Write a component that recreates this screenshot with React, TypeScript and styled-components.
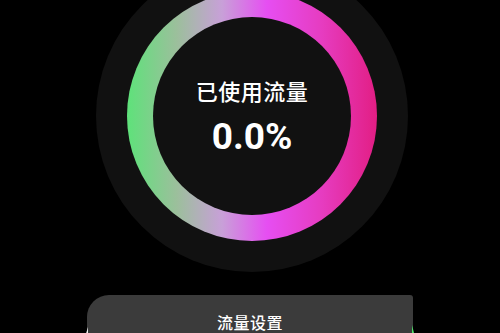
import React from "react";
import styled, { createGlobalStyle } from "styled-components";

const Global = createGlobalStyle`
  html, body { margin: 0; padding: 0; background: #000; }
  body { width: 500px; height: 333px; overflow: hidden; font-family: "Noto Sans CJK SC", "Noto Sans", sans-serif; }
`;

const Page = styled.div`
  width: 500px;
  height: 333px;
  background: #000;
  display: flex;
  flex-direction: column;
  align-items: center;
  overflow: hidden;
`;

const Plate = styled.div`
  width: 312px;
  height: 312px;
  border-radius: 50%;
  background: #111111;
  margin-top: -40px;
  margin-left: 4px;
  flex-shrink: 0;
  display: flex;
  align-items: center;
  justify-content: center;
`;

const Ring = styled.div`
  width: 250px;
  height: 250px;
  border-radius: 50%;
  background: linear-gradient(90deg, #5ee27a 0%, #9cbf9c 20%, #c8a0d8 38%, #e64ef2 56%, #e63cc0 78%, #e21e84 100%);
  display: flex;
  align-items: center;
  justify-content: center;
`;

const Inner = styled.div`
  width: 198px;
  height: 198px;
  border-radius: 50%;
  background: #111111;
  display: flex;
  flex-direction: column;
  align-items: center;
  justify-content: center;
  color: #fff;
  padding-top: 2px;
  box-sizing: border-box;
`;

const Label = styled.div`
  font-size: 22px;
  line-height: 28px;
  font-weight: 500;
  letter-spacing: 0.5px;
`;

const Value = styled.div`
  font-family: "Roboto", "Noto Sans", sans-serif;
  font-size: 37px;
  font-weight: 700;
  line-height: 42px;
  margin-top: 12px;
`;

const ButtonWrap = styled.div`
  position: relative;
  margin-top: 23px;
  width: 326px;
  flex-shrink: 0;
`;

const Button = styled.div`
  position: relative;
  height: 50px;
  background: #3b3b3b;
  border-radius: 22px 3px 0 0;
  color: #fff;
  font-size: 16px;
  font-weight: 500;
  display: flex;
  justify-content: center;
  padding-top: 15px;
  box-sizing: border-box;
  letter-spacing: 0.5px;
  &::before {
    content: "";
    position: absolute;
    left: -2px;
    top: 32px;
    width: 3px;
    height: 10px;
    background: #f0f0f0;
    clip-path: polygon(100% 0, 100% 100%, 0 100%);
  }
  &::after {
    content: "";
    position: absolute;
    right: -2px;
    top: 30px;
    width: 3px;
    height: 12px;
    background: #4fe06a;
    clip-path: polygon(0 0, 100% 100%, 0 100%);
  }
`;

export default function App() {
  return (
    <>
      <Global />
      <Page>
        <Plate>
          <Ring>
            <Inner>
              <Label>已使用流量</Label>
              <Value>0.0%</Value>
            </Inner>
          </Ring>
        </Plate>
        <ButtonWrap>
          <Button>流量设置</Button>
        </ButtonWrap>
      </Page>
    </>
  );
}
